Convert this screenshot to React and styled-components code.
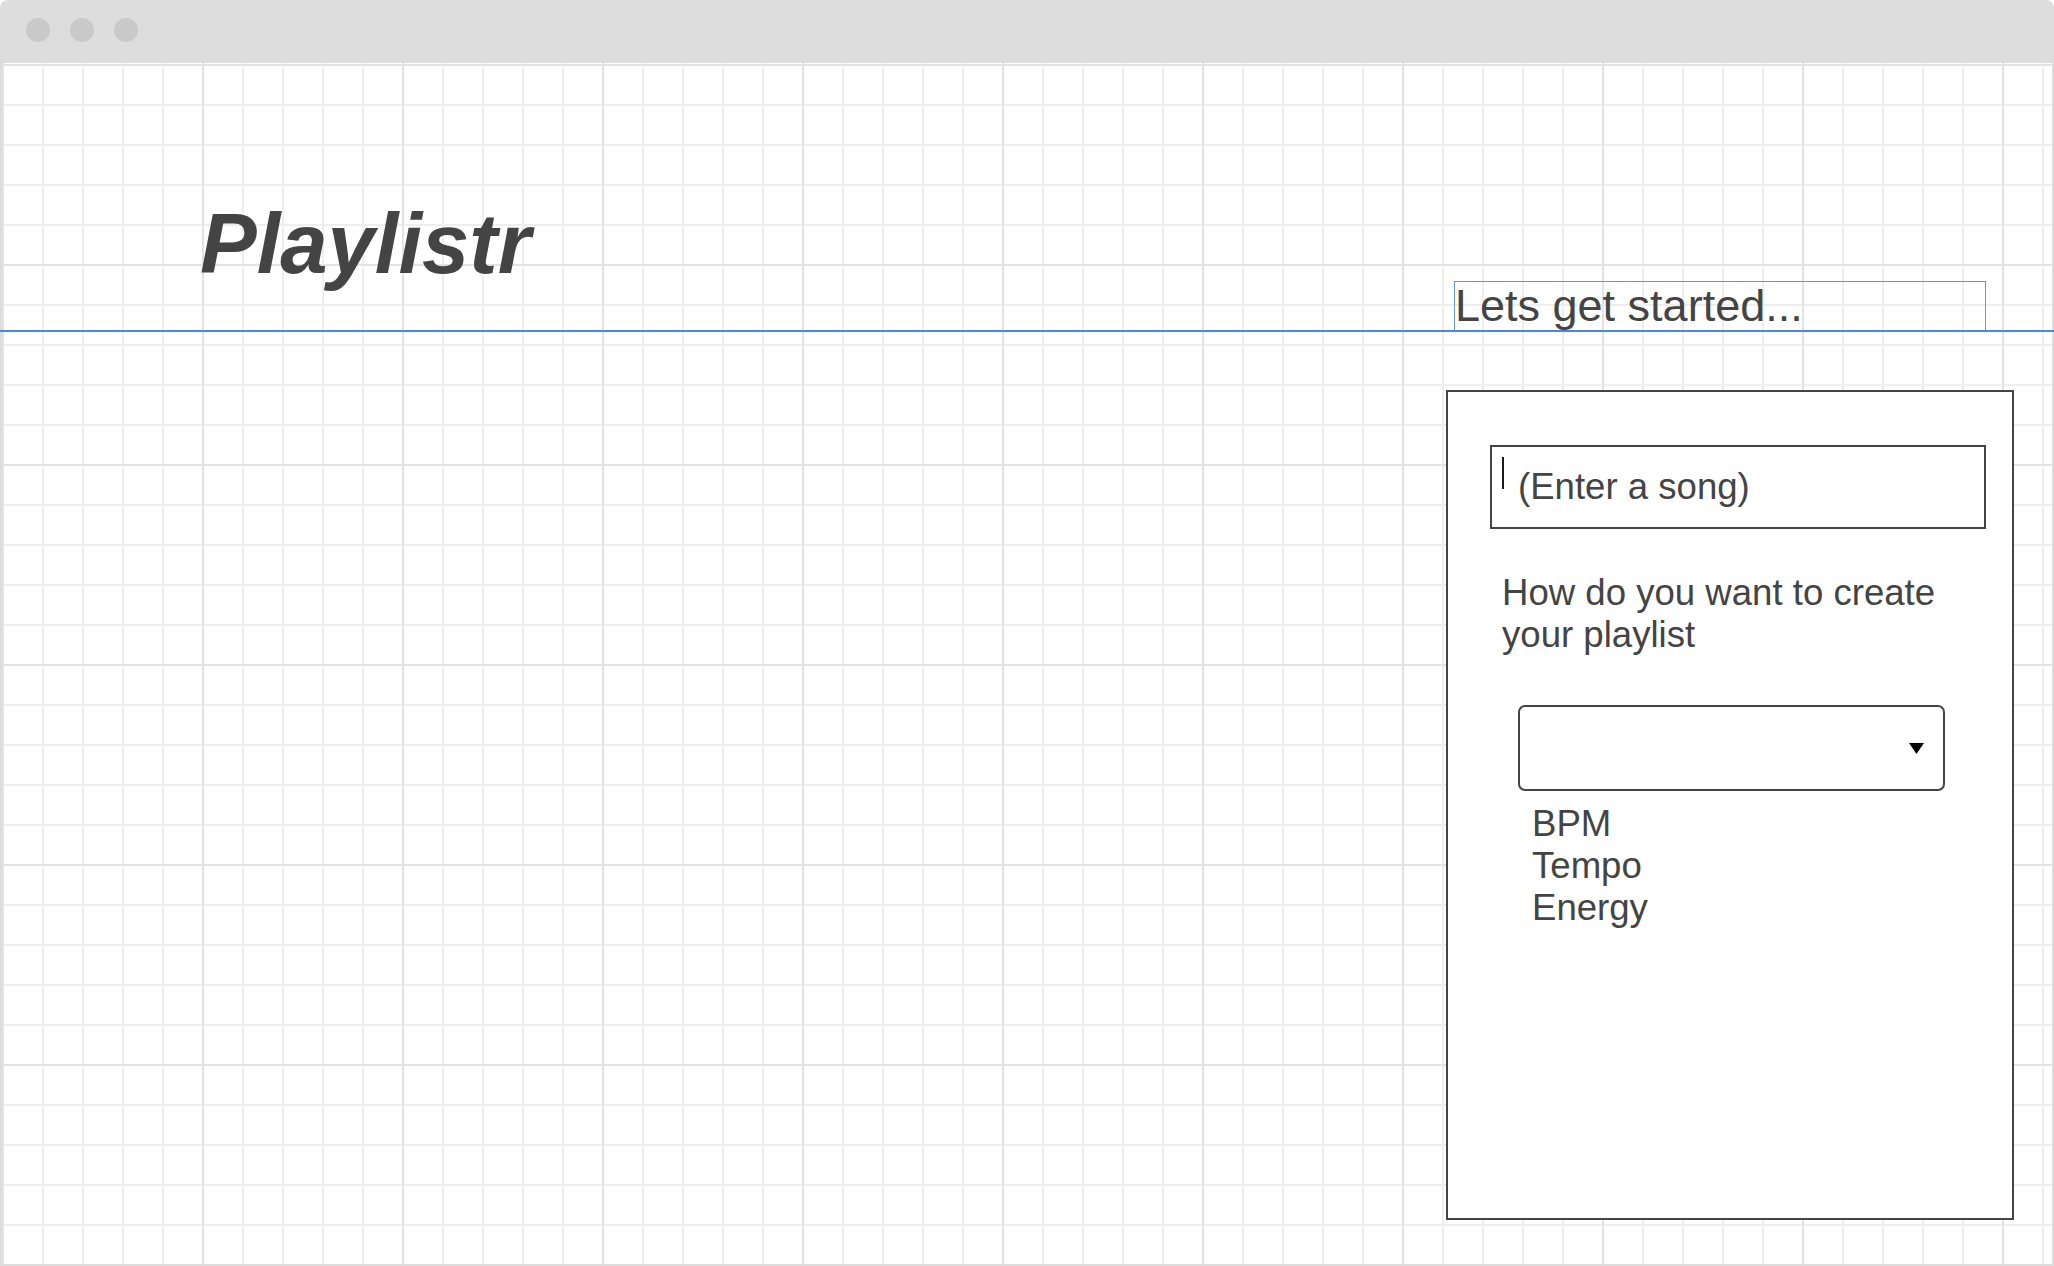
import React from "react";
import styled, { createGlobalStyle } from "styled-components";

const GlobalStyle = createGlobalStyle`
  html, body {
    margin: 0;
    padding: 0;
    background: #ffffff;
    overflow: hidden;
  }
  body {
    font-family: "Liberation Sans", Arial, sans-serif;
    color: #444444;
  }
  *, *::before, *::after {
    box-sizing: border-box;
  }
`;

const Frame = styled.div`
  width: 100vw;
  height: 100vh;
  display: flex;
  flex-direction: column;
`;

const TitleBar = styled.header`
  height: 63px;
  flex: none;
  background: #dddddd;
  border-radius: 8px 8px 0 0;
  display: flex;
  align-items: flex-start;
  gap: 20px;
  padding: 18px 0 0 26px;
`;

const Dot = styled.span`
  width: 24px;
  height: 24px;
  border-radius: 50%;
  background: #c9c9c9;
`;

const Canvas = styled.main`
  flex: 1;
  display: flex;
  flex-direction: column;
  border: 2px solid #dddddd;
  border-top: none;
  background-color: #ffffff;
  background-image:
    linear-gradient(to right, #e3e3e3 2px, transparent 2px),
    linear-gradient(to bottom, #e3e3e3 2px, transparent 2px),
    linear-gradient(to right, #eeeeee 2px, transparent 2px),
    linear-gradient(to bottom, #eeeeee 2px, transparent 2px);
  background-size: 200px 200px, 200px 200px, 40px 40px, 40px 40px;
  background-position: 0 1px, 0 1px, 0 1px, 0 1px;
`;

const Header = styled.div`
  margin: 0 -2px;
  height: 269px;
  flex: none;
  display: flex;
  justify-content: space-between;
  align-items: flex-end;
  padding: 0 68px 0 200px;
  border-bottom: 2px solid #4a86e8;
`;

const Title = styled.h1`
  align-self: flex-start;
  margin: 132px 0 0 0;
  font-size: 85px;
  font-weight: 700;
  font-style: italic;
  line-height: normal;
  color: #444444;
`;

const StartBox = styled.div`
  width: 532px;
  height: 49px;
  border: 1px solid #5f95ea;
  border-bottom: none;
  font-size: 45px;
  line-height: 48px;
  color: #444444;
  white-space: nowrap;
`;

const Body = styled.div`
  flex: 1;
  display: flex;
  justify-content: flex-end;
  align-items: flex-start;
  padding: 58px 38px 0 0;
`;

const Panel = styled.section`
  width: 568px;
  height: 830px;
  border: 2px solid #444444;
  background: #ffffff;
  display: flex;
  flex-direction: column;
  align-items: flex-start;
`;

const SongInput = styled.div`
  margin: 53px 0 0 42px;
  width: 496px;
  height: 84px;
  border: 2px solid #444444;
  display: flex;
  align-items: flex-start;
  padding-left: 10px;
`;

const Caret = styled.span`
  width: 2px;
  height: 32px;
  margin-top: 10px;
  background: #1a1a1a;
`;

const Placeholder = styled.span`
  margin: 20px 0 0 14px;
  font-size: 36.6px;
  line-height: 40px;
  color: #444444;
`;

const Question = styled.p`
  margin: 43px 0 0 54px;
  width: 470px;
  font-size: 36.6px;
  line-height: 42px;
  color: #444444;
`;

const Select = styled.div`
  margin: 49px 0 0 70px;
  width: 427px;
  height: 86px;
  border: 2px solid #444444;
  border-radius: 7px;
  display: flex;
  align-items: center;
  justify-content: flex-end;
  padding-right: 19px;
`;

const Options = styled.ul`
  margin: 12px 0 0 84px;
  padding: 0;
  list-style: none;
  font-size: 36.6px;
  line-height: 42px;
  color: #444444;
`;

const Option = styled.li`
  margin: 0;
`;

const Arrow = () => (
  <svg width="15" height="11" viewBox="0 0 15 11" aria-hidden="true">
    <polygon points="0,0 15,0 7.5,11" fill="#000000" />
  </svg>
);

export default function App() {
  return (
    <>
      <GlobalStyle />
      <Frame>
        <TitleBar>
          <Dot />
          <Dot />
          <Dot />
        </TitleBar>
        <Canvas>
          <Header>
            <Title>Playlistr</Title>
            <StartBox>Lets get started...</StartBox>
          </Header>
          <Body>
            <Panel>
              <SongInput>
                <Caret />
                <Placeholder>(Enter a song)</Placeholder>
              </SongInput>
              <Question>How do you want to create your playlist</Question>
              <Select>
                <Arrow />
              </Select>
              <Options>
                <Option>BPM</Option>
                <Option>Tempo</Option>
                <Option>Energy</Option>
              </Options>
            </Panel>
          </Body>
        </Canvas>
      </Frame>
    </>
  );
}
